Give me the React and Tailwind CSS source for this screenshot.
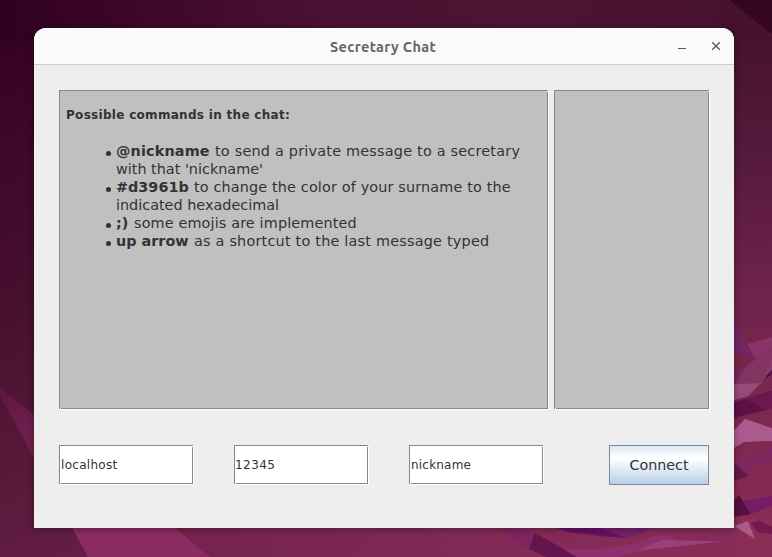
import React from "react";

const FONT = "font-['DejaVu_Sans',sans-serif]";

function Wallpaper() {
  return (
    <svg className="absolute inset-0" width="772" height="557" viewBox="0 0 772 557" aria-hidden="true">
      <defs>
        <linearGradient id="sky" gradientUnits="userSpaceOnUse" x1="0" y1="0" x2="330" y2="640">
          <stop offset="0" stopColor="#310021" />
          <stop offset="0.15" stopColor="#3b0628" />
          <stop offset="0.4" stopColor="#48102f" />
          <stop offset="0.62" stopColor="#591a3c" />
          <stop offset="0.8" stopColor="#6a2047" />
          <stop offset="1" stopColor="#7c2851" />
        </linearGradient>
        <linearGradient id="top" x1="0" y1="0" x2="1" y2="0">
          <stop offset="0" stopColor="#310021" />
          <stop offset="0.4" stopColor="#4a1031" />
          <stop offset="0.7" stopColor="#4d1434" />
          <stop offset="1" stopColor="#45112e" />
        </linearGradient>
        <linearGradient id="right" x1="0" y1="0" x2="0" y2="1">
          <stop offset="0" stopColor="#45112e" />
          <stop offset="0.22" stopColor="#54193a" />
          <stop offset="0.5" stopColor="#6e234a" />
          <stop offset="0.75" stopColor="#7d2850" />
          <stop offset="1" stopColor="#8c2d56" />
        </linearGradient>
        <linearGradient id="floor" x1="0" y1="0" x2="1" y2="0">
          <stop offset="0" stopColor="#74234d" />
          <stop offset="0.5" stopColor="#802a55" />
          <stop offset="1" stopColor="#8a2d57" />
        </linearGradient>
        <linearGradient id="beam" x1="0" y1="0" x2="1" y2="1">
          <stop offset="0" stopColor="#5d1740" />
          <stop offset="1" stopColor="#762152" />
        </linearGradient>
      </defs>
      <rect width="772" height="557" fill="url(#sky)" />
      <rect width="772" height="40" fill="url(#top)" />
      <rect x="722" y="28" width="50" height="529" fill="url(#right)" />
      <path d="M175 520H772V557H175z" fill="url(#floor)" />
      <path d="M729 0H772V34z" fill="#350621" />
      <path d="M0 388L34 415V458L0 396z" fill="url(#beam)" />
      <path d="M68 520H165L210 557H88z" fill="#8a2c61" />

      <path d="M734 326L737 326L747 344L756 359L734 352z" fill="#722561" />
      <path d="M747 344L772 337V348L756 359z" fill="#893367" />
      <path d="M734 369L744 370L734 376z" fill="#7b206d" />
      <path d="M734 384L746 366L772 348V360L762 383z" fill="#80345f" />
      <path d="M734 384L762 383L748 396L734 400z" fill="#964b78" />
      <path d="M762 383L772 358V371L748 396z" fill="#8a396a" />
      <path d="M766 376L772 370V374L767 378z" fill="#50104a" />
      <path d="M734 402L745 399L772 391V408L766 410L734 418z" fill="#5e1047" />
      <path d="M745 399L772 391V408L766 410z" fill="#6c174e" />
      <path d="M734 430L745 419L772 428V441L744 442L734 448z" fill="#aa5a8c" />
      <path d="M734 466L772 446V460L748 470z" fill="#7d265f" />
      <path d="M734 463L749 476L734 481z" fill="#671847" />
      <path d="M744 501L772 496V506L751 514z" fill="#781b67" />
      <path d="M734 500L739 495L751 514L734 517z" fill="#56103f" />
      <path d="M734 526L748 521L755 539z" fill="#aa5989" />
      <path d="M751 523L760 521L772 527V534L757 532z" fill="#73194e" />

      <path d="M500 527H524L535 533L529 549L518 543z" fill="#7f2362" />
      <path d="M535 533L529 549L546 557H577L558 546z" fill="#65154d" />
      <path d="M556 528H602L626 538L600 536L568 532z" fill="#651062" />
      <path d="M600 528H655L626 538z" fill="#75216b" />
      <path d="M564 549L600 549L632 544L662 534L678 539L636 552L620 557H577z" fill="#8d306d" />
      <path d="M636 551L662 540L722 541L700 544z" fill="#97407a" />
      <path d="M700 541L734 529V532L722 541z" fill="#842b60" />
    </svg>
  );
}

/* Metal-style etched frame: slate line with a white highlight at right and bottom */
function Etched({ className, fill, children }) {
  return (
    <div className={`relative border-r border-b border-white ${className}`}>
      <div className={`h-full w-full border border-[#7a8a99] ${fill}`}>{children}</div>
      <span className="absolute -right-px top-0 h-px w-px bg-[#eeeeee]" />
      <span className="absolute -bottom-px left-0 h-px w-px bg-[#eeeeee]" />
      <span className="absolute right-0 top-px h-px w-px bg-white" />
      <span className="absolute bottom-0 left-px h-px w-px bg-white" />
    </div>
  );
}

function Field({ text, className }) {
  return (
    <Etched className="h-10 w-[135px]" fill="bg-white flex items-center">
      <span className={`${FONT} whitespace-nowrap text-[12px] leading-[14px] text-[#333333] ${className}`}>{text}</span>
    </Etched>
  );
}

function Command({ lead, text, rest, leadClass, textClass }) {
  return (
    <li className="relative">
      <span className="absolute -left-[10px] top-[9px] h-[5px] w-[5px] rounded-full bg-[#333333]" />
      <div className="flex h-[18px] items-center whitespace-pre">
        <b className={`shrink-0 ${leadClass}`}>{lead}</b>
        <span className={textClass}>{text}</span>
      </div>
      {rest && <div className="flex h-[18px] items-center">{rest}</div>}
    </li>
  );
}

export default function App() {
  return (
    <div className="relative h-[557px] w-[772px] overflow-hidden">
      <Wallpaper />
      <main className="relative ml-[34px] pt-7">
        <div className="h-[500px] w-[700px] overflow-hidden rounded-t-xl bg-[#eeeeee] shadow-[0_1px_6px_1px_rgba(0,0,0,0.3)]">
          <header className="relative flex h-[37px] items-center border-b border-[#cfcfcf] bg-[#fafafa]">
            <h1 className="ml-[296px] pt-px font-['Ubuntu','Noto_Sans',sans-serif] text-[14.5px] font-bold leading-5 tracking-[0.35px] text-[#666663]">
              Secretary Chat
            </h1>
            <svg className="absolute left-[640px] top-2" width="52" height="22" viewBox="0 0 52 22" fill="none" stroke="#5c5c5a">
              <path d="M4 12.5h8" />
              <path d="M38.2 6.2l7.6 7.6M45.8 6.2L38.2 13.8" strokeWidth="1.4" />
            </svg>
          </header>
          <section className="flex gap-[5px] pl-[25px] pt-[25px]">
            <Etched className="h-[320px] w-[490px]" fill="bg-[#c0c0c0]">
              <div className={`${FONT} pl-[6px] pt-[17px] text-[#333333]`}>
                <p className="h-[14px] whitespace-nowrap text-[12px] font-bold leading-[14px] tracking-[0.3px]">Possible commands in the chat:</p>
                <ul className="ml-[50px] mt-5 text-[14.4px] leading-[18px]">
                  <Command lead="@nickname" text="to send a private message to a secretary" rest="with that 'nickname'" leadClass="w-[99px] tracking-[0.15px]" textClass="tracking-[0.22px]" />
                  <Command lead="#d3961b" text="to change the color of your surname to the" rest="indicated hexadecimal" leadClass="w-[78px]" textClass="tracking-[0.15px]" />
                  <Command lead=";)" text="some emojis are implemented" leadClass="w-[18px]" textClass="tracking-[0.14px]" />
                  <Command lead="up arrow" text="as a shortcut to the last message typed" leadClass="w-[78px]" textClass="tracking-[0.22px]" />
                </ul>
              </div>
            </Etched>
            <Etched className="h-[320px] w-[156px]" fill="bg-[#c0c0c0]" />
          </section>
          <section className="flex pl-[25px] pt-[35px]">
            <div className="flex gap-10">
              <Field text="localhost" className="ml-px tracking-[0.3px]" />
              <Field text="12345" className="tracking-[0.45px]" />
              <Field text="nickname" className="ml-px tracking-[0.2px]" />
            </div>
            <button className={`${FONT} ml-[65px] h-10 w-[100px] border border-[#7a8a99] bg-[linear-gradient(to_bottom,#dde8f3_0%,#ffffff_30%,#ffffff_34%,#b8cfe5_100%)] text-[14.3px] leading-[18px] text-[#333333]`}>
              Connect
            </button>
          </section>
        </div>
      </main>
    </div>
  );
}
